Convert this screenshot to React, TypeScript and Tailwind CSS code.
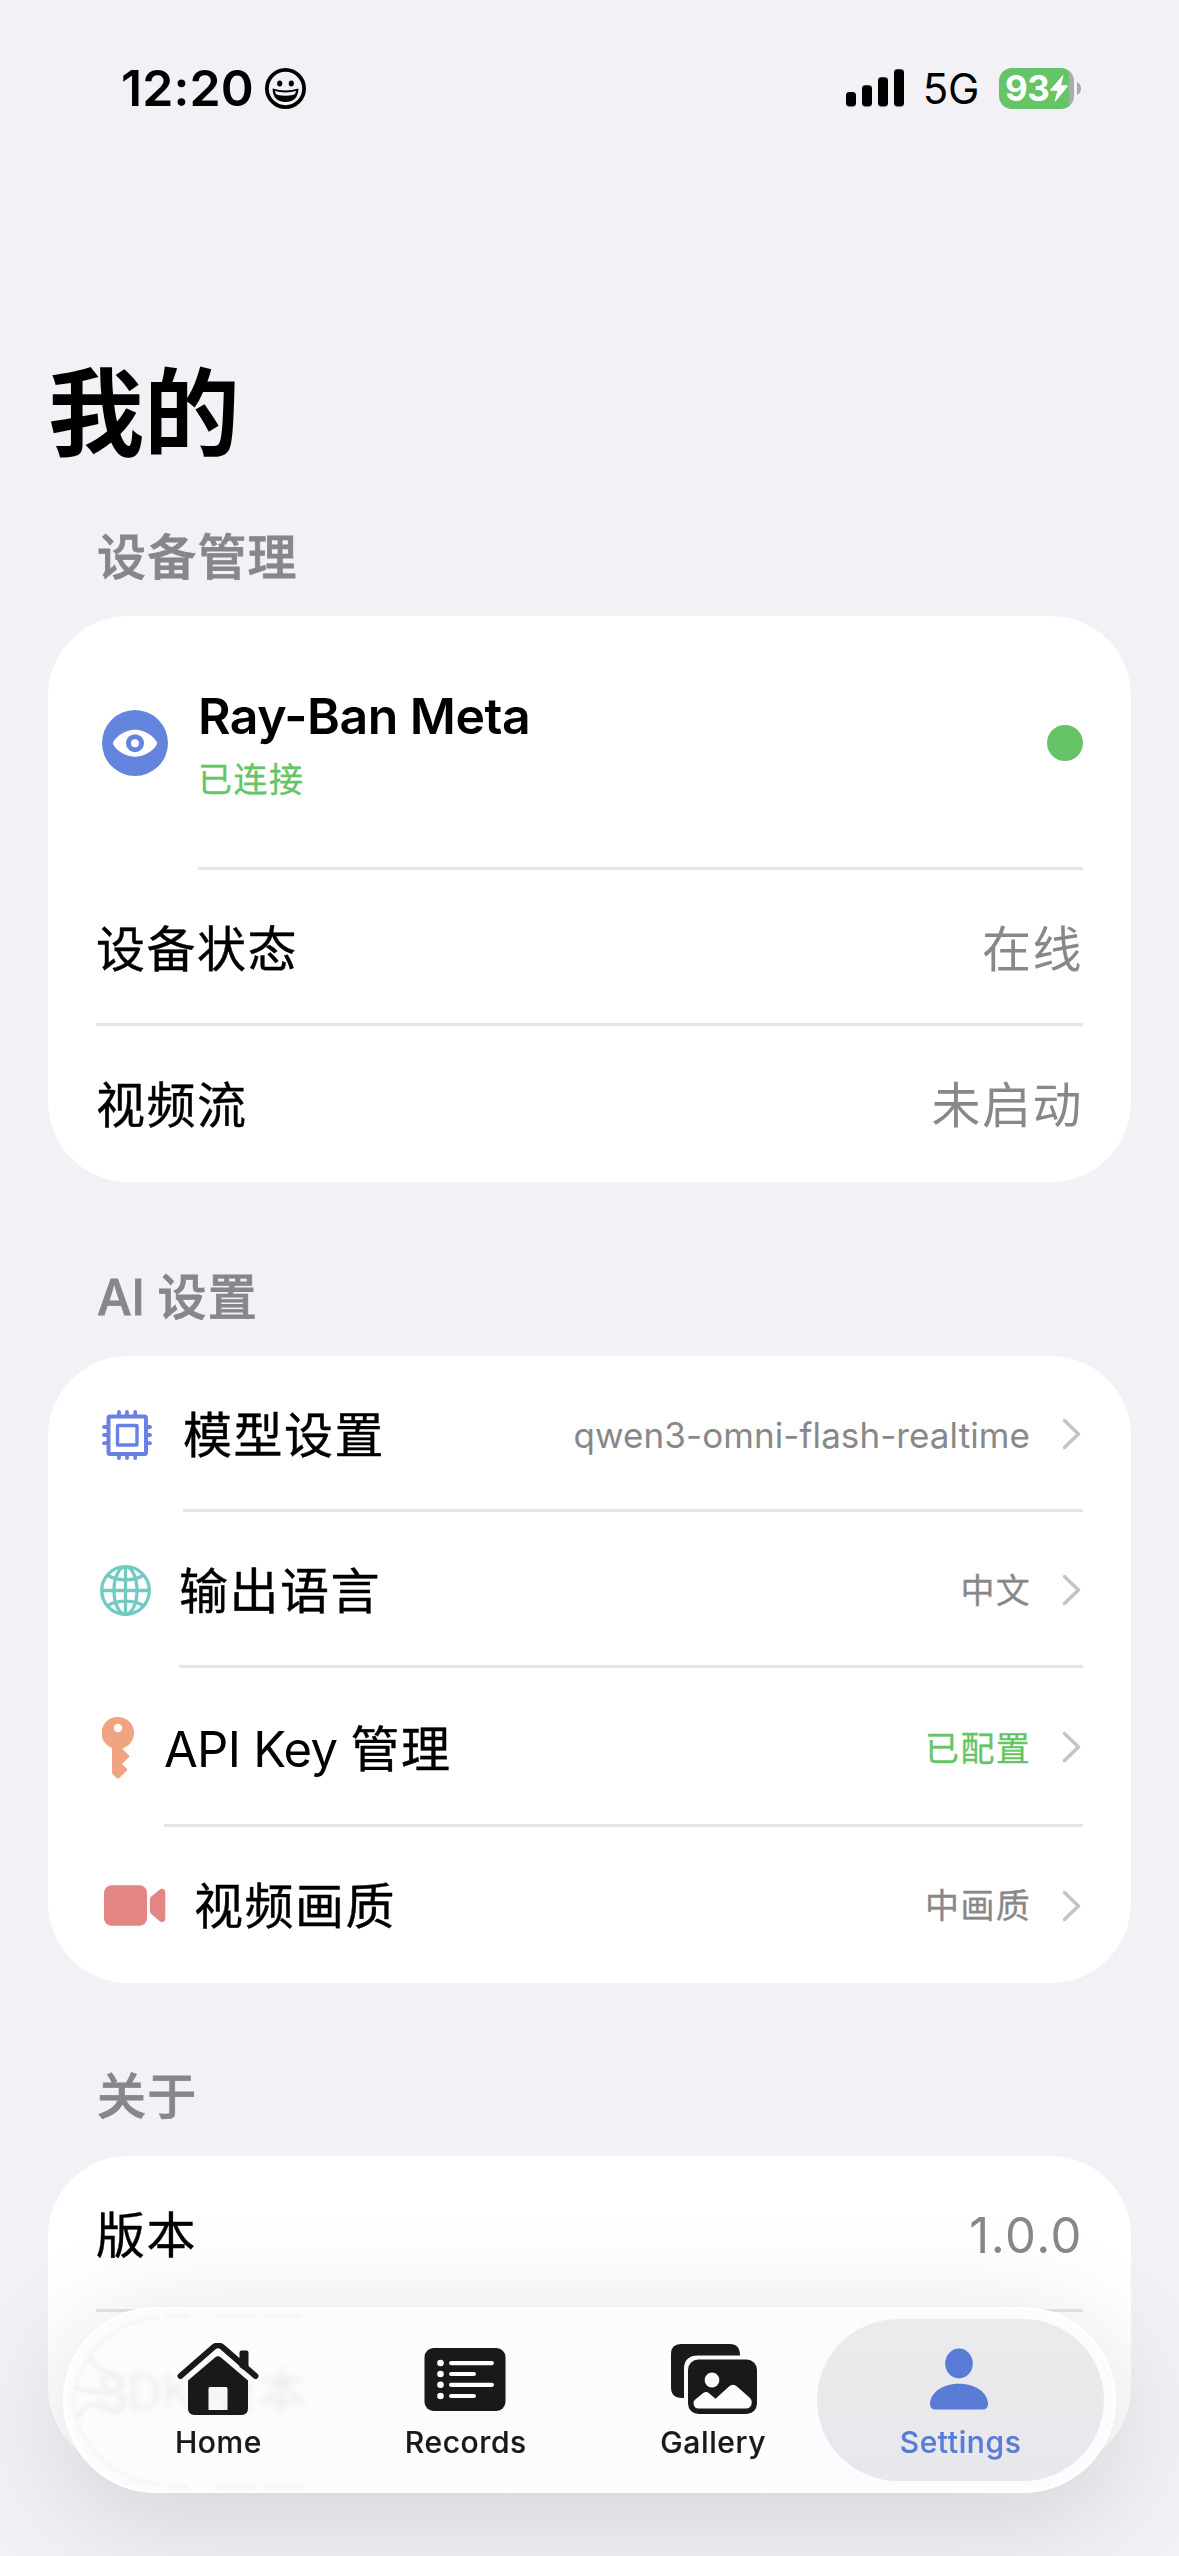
import React from "react";

type IconProps = { className?: string };

function SmileIcon() {
  return (
    <svg width="41" height="41" viewBox="0 0 41 41">
      <circle cx="20.5" cy="20.5" r="18.6" fill="none" stroke="#000" strokeWidth="3.8" />
      <ellipse cx="14.7" cy="15.6" rx="2.6" ry="3" />
      <ellipse cx="26.3" cy="15.6" rx="2.6" ry="3" />
      <path
        d="M7.6 20.6 Q20.5 24.6 33.4 20.6 Q33.2 34 20.5 34 Q7.8 34 7.6 20.6 Z M9.8 23 Q10.2 26 13 27 Q20.5 28.6 28 27 Q30.8 26 31.2 23 Q20.5 25.8 9.8 23 Z"
        fillRule="evenodd"
      />
    </svg>
  );
}

function SignalIcon() {
  return (
    <svg width="58" height="38" viewBox="0 0 58 38">
      <rect x="0" y="23" width="10" height="14.5" rx="3.4" />
      <rect x="16" y="16.3" width="10" height="21.2" rx="3.4" />
      <rect x="32" y="8.3" width="10" height="29.2" rx="3.4" />
      <rect x="48" y="0.3" width="10" height="37.2" rx="3.4" />
    </svg>
  );
}

function Battery() {
  return (
    <div className="flex items-center gap-[3px]">
      <div className="flex h-[41px] w-[75px] items-center overflow-hidden rounded-[13px] bg-[linear-gradient(to_right,#65c466_70px,#abaab1_70px)] pl-[6px]">
        <span className="text-[35px] font-bold leading-none tracking-[-0.5px] text-white">93</span>
        <svg className="ml-[1px] shrink-0" width="18" height="27" viewBox="0 0 18 27">
          <path
            d="M12.6 0.6 C13 0 13.6 0.2 13.4 1 L11 10.2 H17 C18 10.2 18.2 11 17.6 11.7 L5.8 26 C5.2 26.7 4.4 26.2 4.7 25.4 L7.4 15.8 H1 C0.2 15.8 0 15 0.5 14.4 Z"
            fill="#fff"
          />
        </svg>
      </div>
      <svg width="4" height="13" viewBox="0 0 4 13">
        <path d="M0 0 Q4 2 4 6.5 Q4 11 0 13 Z" fill="#abaab1" />
      </svg>
    </div>
  );
}

function EyeIcon({ className }: IconProps) {
  return (
    <svg className={className} width="66" height="66" viewBox="0 0 66 66">
      <circle cx="33" cy="33" r="33" fill="#6485dd" />
      <path d="M11 33.3 C11 30 20.5 19.8 33 19.8 C45.5 19.8 55 30 55 33.3 C55 36.5 45.5 46.7 33 46.7 C20.5 46.7 11 36.5 11 33.3 Z" fill="#fff" />
      <circle cx="33" cy="33.2" r="9" fill="#6485dd" />
      <circle cx="33" cy="33.2" r="4" fill="#fff" />
    </svg>
  );
}

function ChipIcon({ className }: IconProps) {
  return (
    <svg className={className} width="50" height="50" viewBox="0 0 50 50" fill="none" stroke="#6b7fe5" strokeLinecap="round">
      <rect x="6.5" y="6.5" width="37.5" height="37.5" rx="1.5" strokeWidth="4" />
      <rect x="15.5" y="15.5" width="19.5" height="19.5" rx="0.5" strokeWidth="3.4" />
      <path
        d="M17 2V5M25 2V5M33.2 2V5M17 45V48M25 45V48M33.2 45V48M2 17H5M2 25H5M2 33.2H5M45 17H48M45 25H48M45 33.2H48"
        strokeWidth="3.8"
      />
    </svg>
  );
}

function GlobeIcon({ className }: IconProps) {
  return (
    <svg className={className} width="51" height="51" viewBox="0 0 51 51" fill="none" stroke="#72cbc3" strokeWidth="3.3">
      <circle cx="25.5" cy="25.5" r="23.8" />
      <ellipse cx="25.5" cy="25.5" rx="11.5" ry="23.8" />
      <path d="M25.5 1.5V49.5M1.5 25.5H49.5M8 10.5Q15 14.8 25.5 14.8T43 10.5M8 40.5Q15 36.2 25.5 36.2T43 40.5" />
    </svg>
  );
}

function KeyIcon({ className }: IconProps) {
  return (
    <svg className={className} width="32" height="62" viewBox="0 0 32 62">
      <path
        d="M16 0 A16 16 0 0 1 21 31.2 L20.5 32 L27 38.6 Q27.7 39.4 27 40.2 L20 47 L25 51.8 Q25.8 52.7 25 53.5 L17 61.3 Q16 62.2 15 61.3 L10.8 57.4 Q10 56.6 10 55.5 V31 A16 16 0 0 1 16 0 Z M16 6.8 A4.2 4.2 0 1 0 16 15.2 A4.2 4.2 0 1 0 16 6.8 Z"
        fill="#f0a482"
        fillRule="evenodd"
      />
    </svg>
  );
}

function VideoIcon({ className }: IconProps) {
  return (
    <svg className={className} width="62" height="41" viewBox="0 0 62 41" fill="#e28583">
      <rect x="0" y="0.3" width="43" height="40.5" rx="7.5" />
      <path d="M46 14.5 Q46 12.7 47.3 11.6 L55.5 4.7 Q57 3.5 58.8 3.7 Q61.3 4.2 61.3 6.8 V34 Q61.3 36.5 58.8 37 Q57 37.3 55.5 36 L47.3 29 Q46 27.8 46 26 Z" />
    </svg>
  );
}

function Chevron() {
  return (
    <svg className="ml-[31px] mr-[2px] mt-[2px]" width="19" height="32" viewBox="0 0 19 32" fill="none">
      <path d="M2.5 2.5 L16.5 16 L2.5 29.5" stroke="#c4c4c7" strokeWidth="3.5" strokeLinecap="round" strokeLinejoin="round" />
    </svg>
  );
}

function HomeIcon() {
  return (
    <svg className="mr-[2px]" width="82" height="72" viewBox="0 0 82 72" fill="#19191b">
      <path d="M62.5 24 V9.5 Q62.5 7.5 64.5 7.5 H69.5 Q71.5 7.5 71.5 9.5 V30 Z" />
      <path d="M3.5 33 L37 3.8 Q41 1 45 3.8 L78.5 33" fill="none" stroke="#19191b" strokeWidth="5.8" strokeLinecap="round" strokeLinejoin="round" />
      <path
        d="M38.3 14.3 Q41 12 43.7 14.3 L71 37.5 V65.5 Q71 72 64.5 72 H17.5 Q11 72 11 65.5 V37.5 Z M33 44 Q31.5 44 31.5 45.5 V67 H50.5 V45.5 Q50.5 44 49 44 Z"
        fillRule="evenodd"
      />
    </svg>
  );
}

function RecordsIcon() {
  return (
    <svg className="mr-[2px]" width="82" height="63" viewBox="0 0 82 63">
      <rect x="0.5" y="0" width="81" height="63" rx="9" fill="#19191b" />
      <g fill="#fff">
        <circle cx="16.5" cy="15" r="3.3" />
        <circle cx="16.5" cy="26" r="3.3" />
        <circle cx="16.5" cy="36.7" r="3.3" />
        <circle cx="16.5" cy="48" r="3.3" />
        <rect x="25" y="13" width="45" height="4.2" rx="2.1" />
        <rect x="25" y="23.9" width="27" height="4.2" rx="2.1" />
        <rect x="25" y="34.7" width="45" height="4.2" rx="2.1" />
        <rect x="25" y="45.9" width="27" height="4.2" rx="2.1" />
      </g>
    </svg>
  );
}

function GalleryIcon() {
  return (
    <svg className="ml-[2px]" width="86" height="70" viewBox="0 0 86 70">
      <path d="M10 0 H59 Q69 0 69 11.5 H27 Q13 11.5 13 25 V54 H11 Q0 54 0 43 V10 Q0 0 10 0 Z" fill="#19191b" />
      <rect x="17" y="15.5" width="69" height="54.5" rx="10.5" fill="#19191b" />
      <circle cx="41" cy="36" r="7.4" fill="#fcfcfe" />
      <path
        d="M22.5 59 Q22 57.5 24 55.7 L32.5 48.8 Q35 47 37.5 48.8 L44.5 54.8 L58 42.5 Q62 39.2 66 42.5 L79 54 Q81 56 80.8 58.5 Q80.5 64.5 74.5 64.5 H28 Q22.5 64.5 22.5 59 Z"
        fill="#fcfcfe"
      />
    </svg>
  );
}

function PersonIcon() {
  return (
    <svg className="mr-[3px]" width="58" height="62" viewBox="0 0 58 62" fill="#5a7bd5">
      <ellipse cx="29" cy="15.5" rx="13.8" ry="15" />
      <path d="M0 56 C0 46 11 35.8 29 35.8 C47 35.8 58 46 58 56 Q58 61.5 52.5 61.5 H5.5 Q0 61.5 0 56 Z" />
    </svg>
  );
}

function StatusBar() {
  return (
    <div className="flex h-[176px] items-center justify-between pl-[121px] pr-[98px]">
      <div className="flex items-center gap-[11px]">
        <span className="text-[50px] font-semibold leading-none tracking-[0.1px]">12:20</span>
        <SmileIcon />
      </div>
      <div className="flex items-center">
        <SignalIcon />
        <span className="ml-[19px] mr-[20px] pt-[2px] text-[42px] leading-none tracking-[-0.3px]">5G</span>
        <Battery />
      </div>
    </div>
  );
}

function Separator() {
  return <div className="h-[3px] shrink-0 bg-[#e6e6e6]" />;
}

type RowProps = {
  icon?: React.ReactNode;
  // latin words in front of the chinese label are set tighter
  latin?: string;
  label: string;
  value: string;
  height?: string;
  valueClass?: string;
  chevron?: boolean;
  last?: boolean;
};

function Row({
  icon,
  latin,
  label,
  value,
  height = "h-[156px]",
  valueClass = "text-[49px] tracking-[1.5px] text-[#88888b]",
  chevron,
  last,
}: RowProps) {
  return (
    <div className={`flex pl-[48px] pr-[48px] ${height}`}>
      {icon && <div className="flex items-center">{icon}</div>}
      <div className="flex min-w-0 flex-1 flex-col">
        <div className="flex flex-1 items-center justify-between">
          <span className={`whitespace-pre text-[49px] leading-none tracking-[1.5px] [-webkit-text-stroke:0.4px] ${last ? "pt-[2px]" : "pt-[6px]"}`}>
            {latin && <span className="tracking-[-0.7px] [-webkit-text-stroke:0]">{latin} </span>}
            {label}
          </span>
          <div className="flex items-center">
            <span className={`leading-none ${last ? "pt-[2px]" : "pt-[5px]"} ${valueClass}`}>{value}</span>
            {chevron && <Chevron />}
          </div>
        </div>
        {!last && <Separator />}
      </div>
    </div>
  );
}

function Card({ children }: { children: React.ReactNode }) {
  return <div className="mx-[48px] overflow-hidden rounded-[80px] bg-white">{children}</div>;
}

function SectionTitle({ children, className }: { children: React.ReactNode; className: string }) {
  return (
    <h2
      className={`flex items-center whitespace-pre pl-[97px] text-[49px] font-medium leading-none tracking-[1.2px] text-[#87868b] [-webkit-text-stroke:0.8px] ${className}`}
    >
      {children}
    </h2>
  );
}

function DeviceRow() {
  return (
    <div className="flex h-[254px] pl-[54px] pr-[48px]">
      <div className="flex items-center">
        <EyeIcon className="mr-[30px]" />
      </div>
      <div className="flex flex-1 flex-col">
        <div className="flex flex-1 items-center justify-between">
          <div className="flex flex-col gap-[22px] pt-[5px]">
            <span className="text-[50px] font-semibold leading-[50px] tracking-[-0.5px]">Ray-Ban Meta</span>
            <span className="text-[34px] leading-[34px] tracking-[1.5px] text-[#65c466] [-webkit-text-stroke:0.3px]">已连接</span>
          </div>
          <span className="mt-[3px] size-9 rounded-full bg-[#65c466]" />
        </div>
        <Separator />
      </div>
    </div>
  );
}

const SMALL = "text-[34px] tracking-[1.3px] text-[#88888b] [-webkit-text-stroke:0.3px]";
const SMALL_GREEN = "text-[34px] tracking-[1.3px] text-[#65c466] [-webkit-text-stroke:0.3px]";

const tabs = [
  { name: "Home", icon: <HomeIcon />, active: false },
  { name: "Records", icon: <RecordsIcon />, active: false },
  { name: "Gallery", icon: <GalleryIcon />, active: false },
  { name: "Settings", icon: <PersonIcon />, active: true },
];

// light bent by the left end of the glass bar
function GlassEdge() {
  return (
    <svg className="absolute left-0 top-0 blur-[1.5px]" width="260" height="180" viewBox="0 0 260 180" fill="none" stroke="#f2f2f5">
      <path d="M93 7 Q60 9 34 34 Q8 62 8 92 Q8 122 34 148 Q60 172 93 174" strokeWidth="2" />
      <path d="M25 48 Q28 58 40 61 T56 76 Q50 84 30 82 T12 76" strokeWidth="5" />
      <path d="M56 86 Q62 104 44 101 Q30 92 22 96 T13 108" strokeWidth="5" />
      <path d="M100 6 H122 M150 6 H190 M198 6 H236 M100 177 H122 M150 177 H190 M198 177 H236" strokeWidth="3" />
    </svg>
  );
}

function TabBar() {
  return (
    <nav className="absolute left-[63px] top-[2307px] h-[186px] w-[1053px] overflow-hidden rounded-full border-[3px] border-white bg-[#fcfcfe]/94 backdrop-blur-[3px]">
      <GlassEdge />
      <div className="relative flex h-full -space-x-[39.67px] p-[9px]">
        {tabs.map((tab) => (
          <div
            key={tab.name}
            className={`flex w-[287px] shrink-0 flex-col items-center rounded-full ${
              tab.active ? "bg-linear-to-b from-[#ebebec] to-[#e8e7ec] text-[#5a7bd5]" : "text-[#19191b]"
            }`}
          >
            <div className="flex h-[102px] items-center justify-center pt-[18px]">{tab.icon}</div>
            <span className="mt-[5px] text-[30px] font-medium leading-[32px] tracking-[0.6px] [-webkit-text-stroke:0.2px]">{tab.name}</span>
          </div>
        ))}
      </div>
    </nav>
  );
}

export default function App() {
  return (
    <div className="relative h-[2556px] w-[1179px] overflow-hidden bg-[#f2f1f6] font-['Inter','Noto_Sans_CJK_SC',sans-serif] text-black">
      <StatusBar />
      <div className="h-[165px]" />
      <h1 className="flex h-[143px] items-center pl-[48px] text-[96px] font-bold leading-none">我的</h1>

      <SectionTitle className="h-[132px] pt-[14px]">设备管理</SectionTitle>
      <Card>
        <DeviceRow />
        <Row label="设备状态" value="在线" />
        <Row label="视频流" value="未启动" last />
      </Card>

      <SectionTitle className="h-[174px] pt-[56px]">
        <span className="tracking-[-0.2px]">AI </span>设置
      </SectionTitle>
      <Card>
        <Row
          icon={<ChipIcon className="ml-[6px] mr-[31px] mt-[1px]" />}
          label="模型设置"
          value="qwen3-omni-flash-realtime"
          valueClass="text-[35px] tracking-[0.08px] text-[#88888b] mr-[1px]"
          chevron
        />
        <Row icon={<GlobeIcon className="ml-[4px] mr-[28px]" />} label="输出语言" value="中文" valueClass={SMALL} chevron />
        <Row
          icon={<KeyIcon className="ml-[6px] mr-[30px]" />}
          latin="API Key"
          label="管理"
          value="已配置"
          valueClass={SMALL_GREEN}
          height="h-[159px]"
          chevron
        />
        <Row icon={<VideoIcon className="ml-[8px] mr-[28px]" />} label="视频画质" value="中画质" valueClass={SMALL} chevron last />
      </Card>

      <SectionTitle className="h-[173px] pt-[54px]">关于</SectionTitle>
      <Card>
        <Row label="版本" value="1.0.0" />
        <Row latin="SDK" label="版本" value="" last />
      </Card>

      {/* shadow cast by the floating tab bar */}
      <div className="absolute left-[63px] top-[2307px] h-[186px] w-[1053px] rounded-full shadow-[0_22px_120px_rgba(0,0,0,0.14)]" />
      <TabBar />
    </div>
  );
}
